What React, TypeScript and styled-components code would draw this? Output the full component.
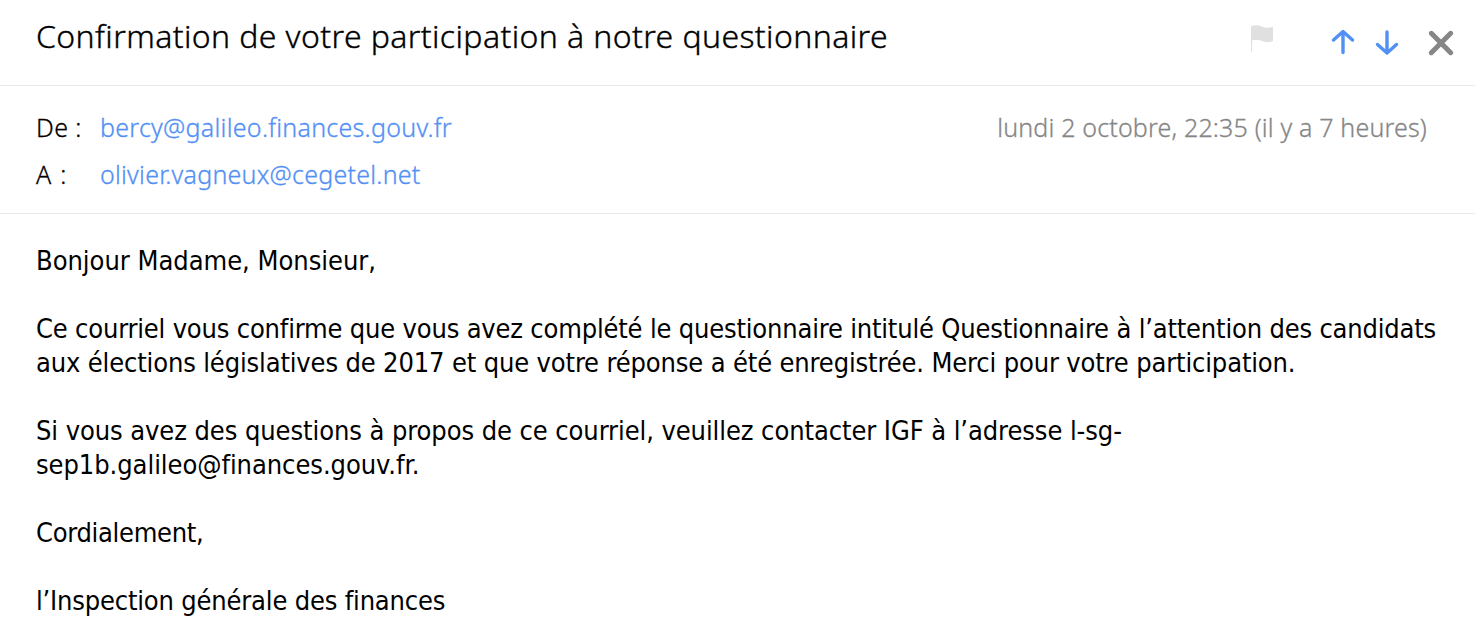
import styled, { createGlobalStyle } from "styled-components";

const GlobalStyle = createGlobalStyle`
  * {
    box-sizing: border-box;
  }
  body {
    margin: 0;
    background: #fff;
    color: #000;
  }
`;
const Wrapper = styled.div`
  width: 1475px;
  height: 636px;
  overflow: hidden;
  background: #fff;
  font-family: "Noto Sans", sans-serif;
`;
const Header = styled.header`
  height: 86px;
  display: flex;
  justify-content: space-between;
  padding: 13px 20px 0 36px;
  border-bottom: 1px solid #ebebeb;
`;
const Title = styled.h1`
  margin: 0;
  font-size: 32px;
  font-weight: 300;
  line-height: 46px;
  letter-spacing: 0.39px;
  white-space: nowrap;
  -webkit-text-stroke: 0.35px currentColor;
`;
const Toolbar = styled.div`
  display: flex;
  align-items: flex-start;
  padding-top: 11px;
`;
const IconButton = styled.button<{ $gap?: number }>`
  display: flex;
  padding: 0;
  margin-left: ${({ $gap = 0 }) => $gap}px;
  border: 0;
  background: none;
  cursor: pointer;
`;
const Details = styled.section`
  height: 128px;
  display: flex;
  justify-content: space-between;
  padding: 18px 48px 0 36px;
  border-bottom: 1px solid #ebebeb;
  -webkit-text-stroke: 0.3px currentColor;
`;
const Row = styled.div`
  display: flex;
  height: 47px;
  font-size: 25px;
  font-weight: 300;
  line-height: 47px;
  white-space: nowrap;
`;
const Label = styled.span<{ $spacing?: number }>`
  width: 64px;
  letter-spacing: ${({ $spacing = 0 }) => $spacing}px;
`;
const Address = styled.a<{ $spacing?: number }>`
  color: #5290f5;
  -webkit-text-stroke-color: #5290f5;
  letter-spacing: ${({ $spacing = 0 }) => $spacing}px;
`;
const DateText = styled.time`
  color: #868686;
  -webkit-text-stroke-color: #868686;
  font-size: 25px;
  font-weight: 300;
  line-height: 47px;
  letter-spacing: 0.17px;
  white-space: nowrap;
`;
const Content = styled.article`
  padding: 30px 36px 0;
  font-family: "DejaVu Sans Condensed", "DejaVu Sans", sans-serif;
  font-stretch: condensed;
  font-size: 27px;
  line-height: 34px;
`;
const Paragraph = styled.p`
  margin: 0 0 34px;
`;
const Line = styled.span<{ $spacing?: number }>`
  display: block;
  white-space: nowrap;
  letter-spacing: ${({ $spacing = 0 }) => $spacing}px;
`;

const paragraphs = [
  [{ text: "Bonjour Madame, Monsieur,", spacing: -0.02 }],
  [
    {
      text: "Ce courriel vous confirme que vous avez complété le questionnaire intitulé Questionnaire à l’attention des candidats",
      spacing: -0.185,
    },
    {
      text: "aux élections législatives de 2017 et que votre réponse a été enregistrée. Merci pour votre participation.",
      spacing: -0.145,
    },
  ],
  [
    {
      text: "Si vous avez des questions à propos de ce courriel, veuillez contacter IGF à l’adresse l-sg-",
      spacing: -0.08,
    },
    { text: "sep1b.galileo@finances.gouv.fr.", spacing: -0.06 },
  ],
  [{ text: "Cordialement,", spacing: -0.3 }],
  [{ text: "l’Inspection générale des finances", spacing: -0.18 }],
];

export default function App() {
  return (
    <>
      <GlobalStyle />
      <Wrapper>
        <Header>
          <Title>Confirmation de votre participation à notre questionnaire</Title>
          <Toolbar>
            <IconButton aria-label="Marquer">
              <svg width="24" height="29" viewBox="0 0 24 29">
                <path
                  d="M1 2.200C5 .8 8 .9 11 2.200C15 4 19 4.200 23 2.800V17C19 18.800 15 18.500 11.500 16.800C8 15.400 5 15.400 2 16.500V27.500H1Z"
                  fill="#e0e0e0"
                />
              </svg>
            </IconButton>
            <IconButton $gap={57} aria-label="Message précédent">
              <svg width="24" height="36" viewBox="0 0 24 36">
                <path
                  d="M12 28.500V7.500M2.500 16L12 7.500L21.500 16"
                  fill="none"
                  stroke="#5290f5"
                  strokeWidth="3.400"
                  strokeLinecap="round"
                  strokeLinejoin="round"
                />
              </svg>
            </IconButton>
            <IconButton $gap={20} aria-label="Message suivant">
              <svg width="24" height="36" viewBox="0 0 24 36">
                <path
                  d="M12 8V29M2.500 20.500L12 29L21.500 20.500"
                  fill="none"
                  stroke="#5290f5"
                  strokeWidth="3.400"
                  strokeLinecap="round"
                  strokeLinejoin="round"
                />
              </svg>
            </IconButton>
            <IconButton $gap={28} aria-label="Fermer">
              <svg width="28" height="36" viewBox="0 0 28 36">
                <path
                  d="M4.300 9.300L23.700 28.700M23.700 9.300L4.300 28.700"
                  stroke="#868686"
                  strokeWidth="5"
                  strokeLinecap="round"
                />
              </svg>
            </IconButton>
          </Toolbar>
        </Header>
        <Details>
          <div>
            <Row>
              <Label $spacing={0.4}>De :</Label>
              <Address $spacing={0.27}>bercy@galileo.finances.gouv.fr</Address>
            </Row>
            <Row>
              <Label $spacing={1.3}>A :</Label>
              <Address $spacing={0.24}>olivier.vagneux@cegetel.net</Address>
            </Row>
          </div>
          <DateText>lundi 2 octobre, 22:35 (il y a 7 heures)</DateText>
        </Details>
        <Content>
          {paragraphs.map((lines, i) => (
            <Paragraph key={i}>
              {lines.map((line) => (
                <Line key={line.text} $spacing={line.spacing}>
                  {line.text}
                </Line>
              ))}
            </Paragraph>
          ))}
        </Content>
      </Wrapper>
    </>
  );
}
